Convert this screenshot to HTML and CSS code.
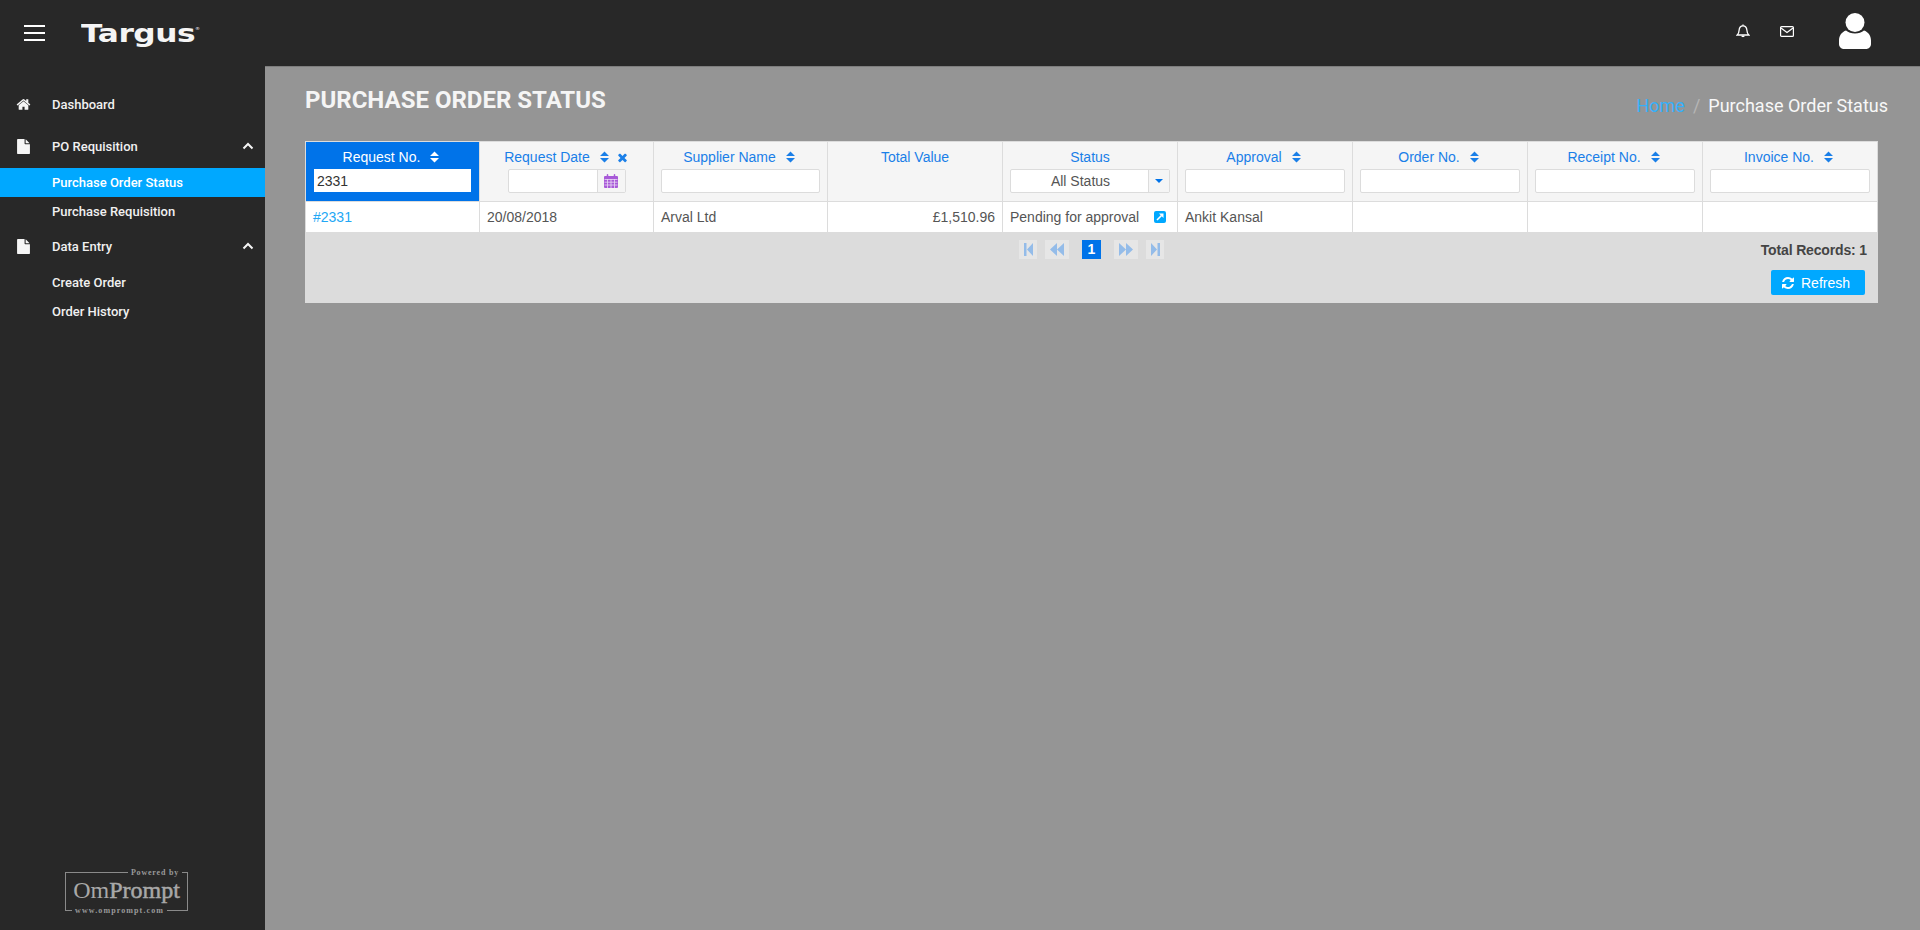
FILE: index.html
```html
<!DOCTYPE html>
<html lang="en">
  <head>
    <meta charset="UTF-8" />
    <meta name="viewport" content="width=device-width, initial-scale=1.0" />
    <title>Purchase Order Status</title>
    <link rel="stylesheet" href="styles.css">
  </head>
  <body>
    <svg class="sprite" aria-hidden="true">
      <symbol id="i-home" viewBox="0 0 1792 1792"><path d="M1472 992v480q0 26-19 45t-45 19h-384v-384h-256v384h-384q-26 0-45-19t-19-45v-480q0-1 .5-3t.5-3l575-474 575 474q1 2 1 6zm223-69l-62 74q-8 9-21 11h-3q-13 0-21-7l-692-577-692 577q-12 8-24 7-13-2-21-11l-62-74q-8-10-7-23.5t11-21.5l719-599q32-26 76-26t76 26l244 204v-195q0-14 9-23t23-9h192q14 0 23 9t9 23v408l219 182q10 8 11 21.5t-7 23.5z"/></symbol>
      <symbol id="i-file" viewBox="0 0 1792 1792"><path d="M1152 512v-472q22 14 36 28l408 408q14 14 28 36h-472zm-128 32q0 40 28 68t68 28h544v1056q0 40-28 68t-68 28h-1344q-40 0-68-28t-28-68v-1600q0-40 28-68t68-28h800v544z"/></symbol>
      <symbol id="i-chevron" viewBox="0 0 12 8"><path d="M1.5 6.5 6 2l4.500 4.500" fill="none" stroke="currentColor" stroke-width="2"/></symbol>
      <symbol id="i-sort" viewBox="0 0 10 12"><path d="M5 0 10 5H0zM0 7h10l-5 5z"/></symbol>
      <symbol id="i-times" viewBox="0 0 1792 1792"><path d="M1490 1322q0 40-28 68l-136 136q-28 28-68 28t-68-28l-294-294-294 294q-28 28-68 28t-68-28l-136-136q-28-28-28-68t28-68l294-294-294-294q-28-28-28-68t28-68l136-136q28-28 68-28t68 28l294 294 294-294q28-28 68-28t68 28l136 136q28 28 28 68t-28 68l-294 294 294 294q28 28 28 68z"/></symbol>
      <symbol id="i-refresh" viewBox="0 0 1792 1792"><path d="M1639 1056q0 5-1 7-64 268-268 434.5t-478 166.5q-146 0-282.5-55t-243.5-157l-129 129q-19 19-45 19t-45-19-19-45v-448q0-26 19-45t45-19h448q26 0 45 19t19 45-19 45l-137 137q71 66 161 102t187 36q134 0 250-65t186-179q11-17 53-117 8-23 30-23h192q13 0 22.5 9.5t9.5 22.5zm25-800v448q0 26-19 45t-45 19h-448q-26 0-45-19t-19-45 19-45l138-138q-148-137-349-137-134 0-250 65t-186 179q-11 17-53 117-8 23-30 23h-199q-13 0-22.5-9.5t-9.5-22.5v-7q65-268 270-434.5t480-166.5q146 0 284 55.5t245 156.5l130-129q19-19 45-19t45 19 19 45z"/></symbol>
    </svg>

    <header class="topbar">
      <div class="hamburger"><span></span><span></span><span></span></div>
      <div class="logo">Targus<sup>®</sup></div>
      <div class="top-icons">
        <svg class="icon-bell" viewBox="0 0 14 14" fill="none" stroke="#fff" stroke-width="1.300">
          <path d="M1.200 11h11.600c-1.300-1.200-1.800-2.500-1.900-4.800C10.700 3.600 9.200 1.800 7 1.800S3.300 3.600 3.100 6.200C3 8.500 2.500 9.800 1.200 11z"/>
          <path d="M5.600 12.300h2.800" stroke-width="1.500"/>
          <path d="M7 .4v1.400"/>
        </svg>
        <svg class="icon-mail" viewBox="0 0 14 11" fill="none" stroke="#fff" stroke-width="1.200">
          <rect x=".6" y=".6" width="12.800" height="9.800" rx="1"/>
          <path d="M1 2l6 4.500L13 2"/>
        </svg>
        <svg class="icon-user" viewBox="0 0 32 36" fill="#fff">
          <circle cx="16" cy="9.500" r="9.500"/>
          <path d="M7 17.500c2.300 2 5.400 3 9 3s6.700-1 9-3c4 1.300 7 5 7 10v3.500c0 2.800-2.200 5-5 5H5c-2.800 0-5-2.200-5-5v-3.500c0-5 3-8.700 7-10z"/>
        </svg>
      </div>
    </header>

    <div class="layout">
      <aside class="sidebar">
        <nav class="side-nav">
          <a class="nav-item nav-first"><svg class="nav-icon"><use href="#i-home"/></svg>Dashboard</a>
          <a class="nav-item"><svg class="nav-icon"><use href="#i-file"/></svg>PO Requisition<svg class="nav-arrow"><use href="#i-chevron"/></svg></a>
          <a class="nav-sub active">Purchase Order Status</a>
          <a class="nav-sub">Purchase Requisition</a>
          <a class="nav-item nav-gap"><svg class="nav-icon"><use href="#i-file"/></svg>Data Entry<svg class="nav-arrow"><use href="#i-chevron"/></svg></a>
          <a class="nav-sub nav-sub-first">Create Order</a>
          <a class="nav-sub">Order History</a>
        </nav>
        <div class="powered">
          <span class="powered-top">Powered by</span>
          <span class="powered-name">Om<span class="powered-strong">Prompt</span></span>
          <span class="powered-url">www.omprompt.com</span>
        </div>
      </aside>

      <main class="content">
        <div class="page-head">
          <h1>PURCHASE ORDER STATUS</h1>
          <div class="crumbs"><a>Home</a><span class="crumb-sep">/</span><span>Purchase Order Status</span></div>
        </div>

        <div class="grid-panel">
          <table class="grid">
            <thead>
              <tr>
                <th class="sorted">
                  <div class="th-label">Request No.<svg class="sort"><use href="#i-sort"/></svg></div>
                  <input class="filter" type="text" value="2331">
                </th>
                <th>
                  <div class="th-label">Request Date<svg class="sort"><use href="#i-sort"/></svg><svg class="clear"><use href="#i-times"/></svg></div>
                  <div class="date-filter">
                    <input type="text">
                    <span class="date-btn">
                      <svg viewBox="0 0 14 14" width="14" height="14">
                        <path fill="#a85ad8" d="M1 2h12a1 1 0 0 1 1 1v10a1 1 0 0 1-1 1H1a1 1 0 0 1-1-1V3a1 1 0 0 1 1-1z"/>
                        <path stroke="#ead9f5" stroke-width=".8" d="M.5 5.500h13M.5 8.200h13M.5 11h13M3.500 5v9M7 5v9M10.500 5v9"/>
                        <path stroke="#a85ad8" stroke-width="1.500" stroke-linecap="round" d="M3.500.8v2.400M10.500.8v2.400"/>
                      </svg>
                    </span>
                  </div>
                </th>
                <th>
                  <div class="th-label">Supplier Name<svg class="sort"><use href="#i-sort"/></svg></div>
                  <input class="filter" type="text">
                </th>
                <th>
                  <div class="th-label">Total Value</div>
                </th>
                <th>
                  <div class="th-label">Status</div>
                  <div class="status-filter">
                    <span class="status-value">All Status</span>
                    <span class="status-btn"><i class="caret"></i></span>
                  </div>
                </th>
                <th>
                  <div class="th-label">Approval<svg class="sort"><use href="#i-sort"/></svg></div>
                  <input class="filter" type="text">
                </th>
                <th>
                  <div class="th-label">Order No.<svg class="sort"><use href="#i-sort"/></svg></div>
                  <input class="filter" type="text">
                </th>
                <th>
                  <div class="th-label">Receipt No.<svg class="sort"><use href="#i-sort"/></svg></div>
                  <input class="filter" type="text">
                </th>
                <th>
                  <div class="th-label">Invoice No.<svg class="sort"><use href="#i-sort"/></svg></div>
                  <input class="filter" type="text">
                </th>
              </tr>
            </thead>
            <tbody>
              <tr>
                <td><a class="req-link">#2331</a></td>
                <td>20/08/2018</td>
                <td>Arval Ltd</td>
                <td class="num">£1,510.96</td>
                <td>
                  <div class="status-cell">Pending for approval
                    <span class="open-btn">
                      <svg viewBox="0 0 12 12" width="12" height="12"><path d="M3 9 7.500 4.500" stroke="#fff" stroke-width="1.600"/><path d="M5 2.500h4.500V7z" fill="#fff"/></svg>
                    </span>
                  </div>
                </td>
                <td>Ankit Kansal</td>
                <td></td>
                <td></td>
                <td></td>
              </tr>
            </tbody>
          </table>

          <div class="grid-footer">
            <div class="footer-row">
              <div class="pager">
                <span class="pg pg-end"><svg viewBox="0 0 9 13" width="9" height="13"><path d="M0 0h2.500v13H0zM9 0v13L3 6.500z"/></svg></span>
                <span class="pg pg-step"><svg viewBox="0 0 14 13" width="14" height="13"><path d="M7 0v13L0 6.500zM14 0v13L7 6.500z"/></svg></span>
                <span class="pg-current">1</span>
                <span class="pg pg-step"><svg viewBox="0 0 14 13" width="14" height="13"><path d="M0 0v13l7-6.500zM7 0v13l7-6.500z"/></svg></span>
                <span class="pg pg-end"><svg viewBox="0 0 9 13" width="9" height="13"><path d="M0 0v13l6-6.500zM6.500 0H9v13H6.500z"/></svg></span>
              </div>
              <div class="total">Total Records: 1</div>
            </div>
            <div class="refresh-row">
              <button class="refresh"><svg><use href="#i-refresh"/></svg>Refresh</button>
            </div>
          </div>
        </div>
      </main>
    </div>
  </body>
</html>
```

FILE: styles.css
```css
* {
  box-sizing: border-box;
}

body {
  margin: 0;
  height: 930px;
  overflow: hidden;
  display: flex;
  flex-direction: column;
  background-color: #959595;
  font-family: "Liberation Sans", Arial, sans-serif;
  font-size: 14px;
  color: #555;
}

.sprite {
  display: none;
}

/* top bar */
.topbar {
  height: 66px;
  flex: none;
  display: flex;
  align-items: center;
  background-color: #282828;
}

.hamburger {
  width: 21px;
  margin-left: 24px;
  display: flex;
  flex-direction: column;
  gap: 5px;
}

.hamburger span {
  height: 2px;
  background: #fff;
}

.logo {
  margin-left: 36px;
  width: 120px;
  font-family: "DejaVu Sans", sans-serif;
  font-weight: bold;
  font-size: 25px;
  line-height: 27px;
  color: #f5f5f5;
  letter-spacing: -0.4px;
  transform: scaleX(1.25);
  transform-origin: left center;
}

.logo sup {
  font-size: 4px;
  font-weight: normal;
  vertical-align: 12px;
  line-height: 0;
}

.top-icons {
  margin-left: auto;
  padding-bottom: 4px;
  display: flex;
  align-items: center;
}

.icon-bell {
  width: 14px;
  height: 14px;
  margin-right: 30px;
}

.icon-mail {
  width: 14px;
  height: 11px;
  margin-right: 45px;
}

.icon-user {
  width: 32px;
  height: 36px;
  margin-right: 49px;
}

.layout {
  flex: 1;
  display: flex;
  min-height: 0;
}

/* sidebar */
.sidebar {
  width: 265px;
  flex: none;
  display: flex;
  flex-direction: column;
  background-color: #282828;
  font-family: Roboto, sans-serif;
  font-weight: 500;
  font-size: 13px;
  color: #f0f0f0;
}

.side-nav {
  display: flex;
  flex-direction: column;
  padding-top: 23px;
}

.nav-item {
  height: 30px;
  display: flex;
  align-items: center;
  padding-left: 52px;
  position: relative;
}

.nav-first {
  margin-bottom: 12px;
}

.nav-gap {
  margin-top: 5px;
}

.nav-icon {
  position: absolute;
  left: 16px;
  top: 8px;
  width: 15px;
  height: 15px;
  fill: #f5f5f5;
}

.nav-arrow {
  position: absolute;
  right: 11px;
  top: 11px;
  width: 12px;
  height: 8px;
  color: #f5f5f5;
}

.nav-sub {
  height: 29px;
  line-height: 29px;
  padding-left: 52px;
}

.nav-sub.active {
  margin-top: 7px;
  background-color: #00a8ff;
  color: #fff;
}

.nav-sub-first {
  margin-top: 7px;
}

.powered {
  margin: auto 0 19px 65px;
  width: 123px;
  height: 39px;
  border: 1px solid #8a8a8a;
  position: relative;
  text-align: center;
  color: #9a9a9a;
  font-family: "Liberation Serif", serif;
  font-weight: normal;
}

.powered-top,
.powered-url {
  position: absolute;
  background: #282828;
  font-size: 8px;
  line-height: 9px;
  font-weight: bold;
  padding: 0 3px;
}

.powered-top {
  top: -5px;
  right: 5px;
  letter-spacing: 0.8px;
}

.powered-url {
  bottom: -5px;
  left: 6px;
  letter-spacing: 1.1px;
}

.powered-name {
  display: block;
  font-size: 24px;
  line-height: 35px;
  color: #a8a8a8;
}

.powered-strong {
  -webkit-text-stroke: 0.5px #a8a8a8;
}

/* main */
.content {
  flex: 1;
  min-width: 0;
  padding: 19px 42px 0 40px;
  border-top: 1px solid #7d7d7d;
}

.page-head {
  height: 55px;
  display: flex;
  justify-content: space-between;
  margin-right: -10px;
  font-family: Roboto, sans-serif;
}

.page-head h1 {
  margin: 0;
  font-size: 24px;
  line-height: 28px;
  font-weight: 700;
  color: #f5f5f5;
}

.crumbs {
  padding-top: 9px;
  font-size: 18px;
  line-height: 21px;
  color: #f8f8f8;
}

.crumbs a {
  color: #35b0fa;
}

.crumb-sep {
  margin: 0 8px;
  color: #b5b5b5;
}

/* table */
.grid-panel {
  background-color: #dcdcdc;
}

.grid {
  width: 100%;
  table-layout: fixed;
  border-collapse: collapse;
  background: #fff;
}

.grid th,
.grid td {
  border: 1px solid #dcdcdc;
}

.grid th {
  height: 60px;
  padding: 5px 7px 7px;
  vertical-align: top;
  background-color: #f5f5f5;
  font-weight: normal;
  color: #1a7fe8;
}

.grid th:nth-child(-n+3) {
  width: 174px;
}

.grid th.sorted {
  background-color: #0073e9;
  color: #fff;
}

.th-label {
  height: 20px;
  margin-bottom: 2px;
  display: flex;
  align-items: center;
  justify-content: center;
  white-space: nowrap;
}

.sort {
  width: 9px;
  height: 12px;
  margin: 0 3px 0 10px;
  fill: currentColor;
}

.clear {
  width: 13px;
  height: 13px;
  margin-left: 4px;
  fill: currentColor;
}

.filter {
  display: block;
  width: 100%;
  height: 24px;
  padding: 0 3px;
  border: 1px solid #dcdcdc;
  border-radius: 2px;
  background: #fff;
  font: 14px "Liberation Sans", Arial, sans-serif;
  color: #333;
}

.sorted .filter {
  width: 157px;
  height: 23px;
  margin: 1px 0 0 1px;
  border: 0;
  border-radius: 0;
}

.date-filter {
  width: 118px;
  height: 24px;
  margin: 0 auto;
  display: flex;
  border: 1px solid #dcdcdc;
  border-radius: 2px;
  background: #fff;
}

.date-filter input {
  flex: 1;
  min-width: 0;
  border: 0;
  background: transparent;
}

.date-btn {
  width: 28px;
  display: flex;
  align-items: center;
  justify-content: center;
  border-left: 1px solid #dcdcdc;
  background: #f5f5f5;
}

.status-filter {
  height: 24px;
  display: flex;
  border: 1px solid #dcdcdc;
  border-radius: 2px;
  background: #fff;
  color: #555;
}

.status-value {
  flex: 1;
  padding-left: 2px;
  text-align: center;
  line-height: 22px;
}

.status-btn {
  width: 21px;
  display: flex;
  align-items: center;
  justify-content: center;
  border-left: 1px solid #dcdcdc;
  background: #f5f5f5;
}

.caret {
  border-left: 4px solid transparent;
  border-right: 4px solid transparent;
  border-top: 4px solid #0073e9;
}

.grid td {
  height: 31px;
  padding: 0 7px;
  white-space: nowrap;
}

.grid td.num {
  text-align: right;
}

.req-link {
  color: #22a7f5;
}

.status-cell {
  display: flex;
  align-items: center;
  justify-content: space-between;
  padding-right: 4px;
}

.open-btn {
  width: 12px;
  height: 12px;
  border-radius: 2px;
  background-color: #00a8ff;
  display: flex;
}

/* footer */
.grid-footer {
  height: 70px;
  padding: 6px 11px 0 0;
}

.footer-row {
  display: grid;
  grid-template-columns: 1fr auto 1fr;
  align-items: center;
  height: 20px;
}

.pager {
  grid-column: 2;
  display: flex;
  align-items: center;
  height: 19px;
  margin-left: 11px;
}

.pg {
  height: 19px;
  display: flex;
  align-items: center;
  justify-content: center;
  background-color: #e6e6e6;
  fill: #94bce9;
}

.pg-end {
  width: 18px;
}

.pg-step {
  width: 24px;
}

.pager .pg:nth-child(1) {
  margin-right: 8px;
}

.pg-current {
  width: 19px;
  height: 19px;
  margin: 0 13px;
  text-align: center;
  line-height: 19px;
  font-weight: bold;
  font-size: 14px;
  background-color: #0073e9;
  color: #fff;
}

.pager .pg:nth-child(4) {
  margin-right: 8px;
}

.total {
  grid-column: 3;
  padding-top: 1px;
  text-align: right;
  font-weight: bold;
  font-size: 14px;
  letter-spacing: -0.15px;
  color: #444;
}

.refresh-row {
  display: flex;
  justify-content: flex-end;
  margin-top: 11px;
  padding-right: 2px;
}

.refresh {
  width: 94px;
  height: 25px;
  padding: 0 5px 0 0;
  display: flex;
  align-items: center;
  justify-content: center;
  gap: 6px;
  border: 0;
  border-radius: 2px;
  background-color: #00a8ff;
  color: #fff;
  font: 14px "Liberation Sans", Arial, sans-serif;
}

.refresh svg {
  width: 14px;
  height: 14px;
  fill: #fff;
}
```
